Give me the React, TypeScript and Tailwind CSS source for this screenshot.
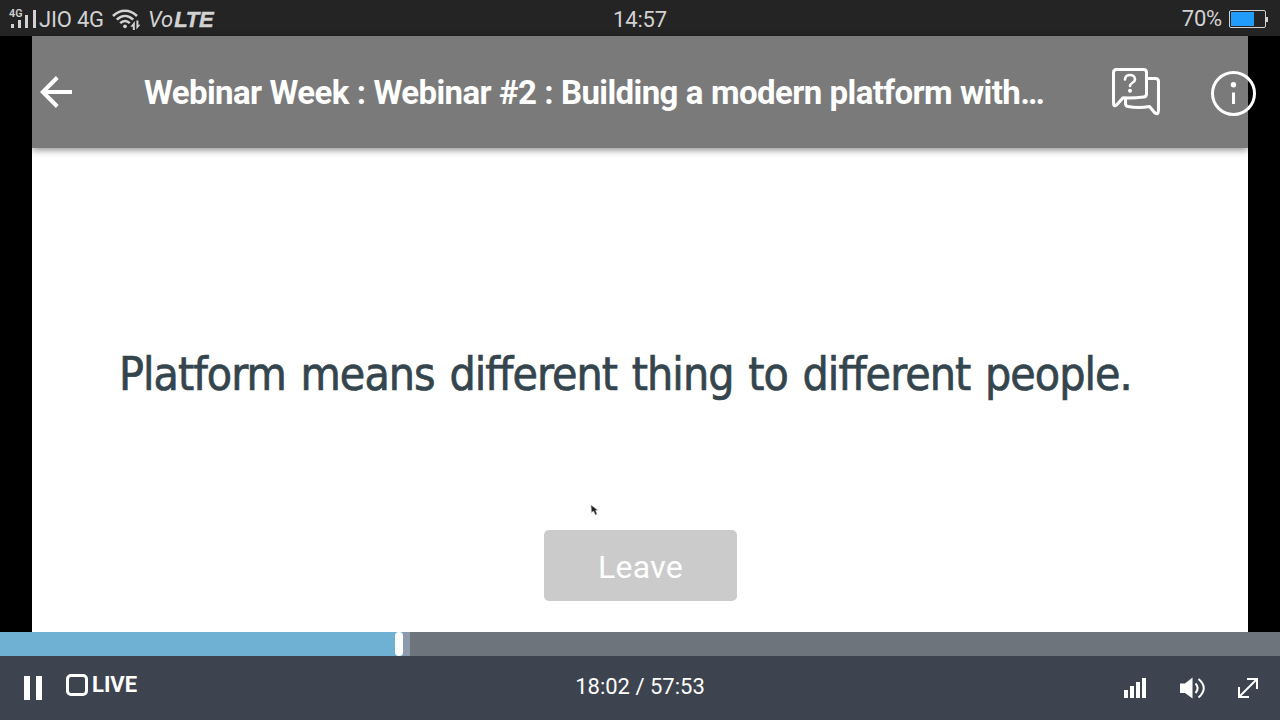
function SignalIcon() {
  return (
    <svg width="30" height="36" viewBox="0 0 30 36" className="shrink-0">
      <text x="0" y="16" fontSize="10" fontWeight="600" fill="#d2d2d2" fontFamily="Roboto, sans-serif" textLength="13.5" lengthAdjust="spacingAndGlyphs">4G</text>
      <g fill="#d2d2d2">
        <rect x="2" y="23" width="3" height="4" />
        <rect x="9" y="19" width="3" height="8" />
        <rect x="16" y="14" width="3" height="13" />
        <rect x="24" y="9" width="3" height="18" />
      </g>
    </svg>
  );
}

function WifiIcon() {
  return (
    <svg width="30" height="24" viewBox="0 0 30 24" fill="none" className="-mt-px shrink-0">
      <g stroke="#d2d2d2" strokeWidth="2.5">
        <path d="M1 9C8 2 18 2 25 9" />
        <path d="M4.8 12.700C10 7.700 16 7.700 21.2 12.700" />
        <path d="M8.2 16.200C11 13.300 15 13.300 17.8 16.200" />
      </g>
      <circle cx="13" cy="19.3" r="1.9" fill="#d2d2d2" />
      <path d="M19 18.5h5v-7M23 16v7" stroke="#242424" strokeWidth="2" />
      <path d="M22.8 14v9h-2v-3.3h-2.400zM24.4 22.500v-9h2v4.300h2z" fill="#d2d2d2" />
    </svg>
  );
}

function StatusBar() {
  return (
    <div className="grid h-9 shrink-0 grid-cols-3 bg-[#242424] text-[22px] leading-9 text-[#d2d2d2]">
      <div className="flex items-center pl-[9px]">
        <SignalIcon />
        <span className="w-[73px] whitespace-nowrap pt-[2px] tracking-[-0.2px]">JIO 4G</span>
        <WifiIcon />
        <span className="ml-[6px] whitespace-nowrap pt-px italic">
          Vo<b className="ml-px font-['Liberation_Sans',sans-serif] font-bold tracking-[-0.2px] [-webkit-text-stroke:0.4px_#d2d2d2]">LTE</b>
        </span>
      </div>
      <div className="pt-[2px] text-center tracking-[-0.2px]">14:57</div>
      <div className="flex items-center justify-end pr-[12px]">
        <span className="mr-[7px] tracking-[-0.2px]">70%</span>
        <div className="flex h-[18px] w-[37px] rounded-[2px] border border-[#d2d2d2] p-px">
          <div className="w-[23px] bg-[#229cfb]" />
        </div>
        <div className="h-[5px] w-[2px] bg-[#d2d2d2]" />
      </div>
    </div>
  );
}

function TopBar() {
  return (
    <header className="flex h-28 items-center bg-[#7a7a7a] pl-2 text-white shadow-[0_2px_7px_rgba(0,0,0,0.45)]">
      <svg width="32" height="32" viewBox="0 0 32 32" fill="none" stroke="white" strokeWidth="4" className="shrink-0">
        <path d="M32 16H3M17.300 1.500L2.800 16L17.300 30.500" />
      </svg>
      <h1 className="ml-[72px] w-[968px] shrink-0 whitespace-nowrap pt-[2px] text-[33px] font-bold leading-10 tracking-[-0.6px] [word-spacing:0.4px]">
        Webinar Week : Webinar #2 : Building a modern platform with…
      </h1>
      <svg width="48" height="48" viewBox="0 0 48 48" fill="none" stroke="white" strokeWidth="3" strokeLinejoin="round" strokeLinecap="round" className="shrink-0">
        <path d="M4.500 1.500H31.500Q34.500 1.500 34.500 4.500V26Q34.500 28.800 31.500 29.100Q21 30.300 11 29.800L5 36.500Q1.500 39.500 1.500 35V4.500Q1.500 1.500 4.500 1.500Z" />
        <path d="M35 10.500H43.500Q46.500 10.500 46.500 13.500V42Q46.500 48 42.500 44.500L37.500 38.500Q27 40.500 16 38.600Q13.500 38 13.500 35.500V31" />
        <path d="M13 11.500C13 5.500 23 5.500 23 11.500C23 15 18 14.500 18 18" strokeWidth="2.600" />
        <circle cx="18" cy="22.700" r="2" fill="white" stroke="none" />
      </svg>
      <svg width="46" height="46" viewBox="0 0 46 46" className="ml-[50px] mt-[3px] shrink-0">
        <circle cx="23.500" cy="22.500" r="21" fill="none" stroke="white" strokeWidth="3" />
        <circle cx="23.500" cy="13.800" r="2.700" fill="white" />
        <rect x="22" y="21.500" width="3" height="11.500" fill="white" />
      </svg>
    </header>
  );
}

function Stage() {
  return (
    <main className="h-[596px] shrink-0 bg-black px-8">
      <div className="flex h-full flex-col bg-white">
        <TopBar />
        <p className="mt-[196px] h-[60px] whitespace-nowrap pl-[87px] font-['DejaVu_Sans_Condensed','DejaVu_Sans',sans-serif] text-[46px] leading-[60px] tracking-[-0.95px] text-[#34454e] [-webkit-text-stroke:0.7px_#34454e] [word-spacing:2.5px]">
          Platform means different thing to different people.
        </p>
        <svg width="10" height="12" viewBox="0 0 10 12" className="ml-[558px] mt-[100px] shrink-0">
          <path d="M1 1L1.500 8.500L3.500 7L5.500 11L7 10L5.500 6.500L7.500 6Z" fill="#222" stroke="#bbb" strokeWidth=".6" />
        </svg>
        <button className="ml-[512px] mt-[14px] h-[71px] w-[193px] rounded-[5px] bg-[#cbcbcb] pt-[3px] text-[32px] tracking-[0.3px] text-white">
          Leave
        </button>
      </div>
    </main>
  );
}

function Controls() {
  return (
    <footer className="grid h-16 grid-cols-3 bg-[#3e444f] text-white">
      <div className="flex items-start pl-6 pt-5">
        <svg width="18" height="24" viewBox="0 0 18 24" fill="white">
          <path d="M0 0h6v24H0zM12 0h6v24h-6z" />
        </svg>
        <div className="ml-6 mt-[-2px] h-[22px] w-[22px] rounded-[5px] border-[3px] border-white" />
        <span className="ml-1 mt-[-3px] text-[22px] font-bold leading-6">LIVE</span>
      </div>
      <div className="pt-[18px] text-center text-[22px] leading-[26px]">18:02 / 57:53</div>
      <div className="flex items-start justify-end pr-[22px] pt-[21px]">
        <svg width="22" height="22" viewBox="0 0 22 22" fill="white">
          <path d="M0 13h4v8H0zM6 9h4v12H6zM12 5h4v16h-4zM18 1h4v20h-4z" />
        </svg>
        <svg width="26" height="22" viewBox="0 0 26 22" fill="none" className="ml-[34px]">
          <path d="M0 6.500H5L12.500 0.500V21.500L5 16H0Z" fill="white" />
          <g stroke="white" strokeWidth="2">
            <path d="M15.500 6.500Q19.800 11 15.500 16" />
            <path d="M18.500 2Q29 11 18.500 20.500" />
          </g>
        </svg>
        <svg width="20" height="20" viewBox="0 0 20 20" fill="none" stroke="white" strokeWidth="2" className="ml-[32px] mt-px">
          <path d="M9 1H19V11M1 9V19H11M19 1L1 19" />
        </svg>
      </div>
    </footer>
  );
}

export default function App() {
  return (
    <div className="flex h-[720px] w-[1280px] flex-col overflow-hidden font-[Roboto,sans-serif]">
      <StatusBar />
      <Stage />
      <div className="flex h-6 shrink-0 bg-[#6d747c]">
        <div className="w-[395px] bg-[#6fb1d2]" />
        <div className="flex w-[15px] bg-[linear-gradient(90deg,#6fb1d2_50%,#8c9aac_50%)]">
          <div className="h-6 w-2 rounded-[4px] bg-white" />
        </div>
      </div>
      <Controls />
    </div>
  );
}
